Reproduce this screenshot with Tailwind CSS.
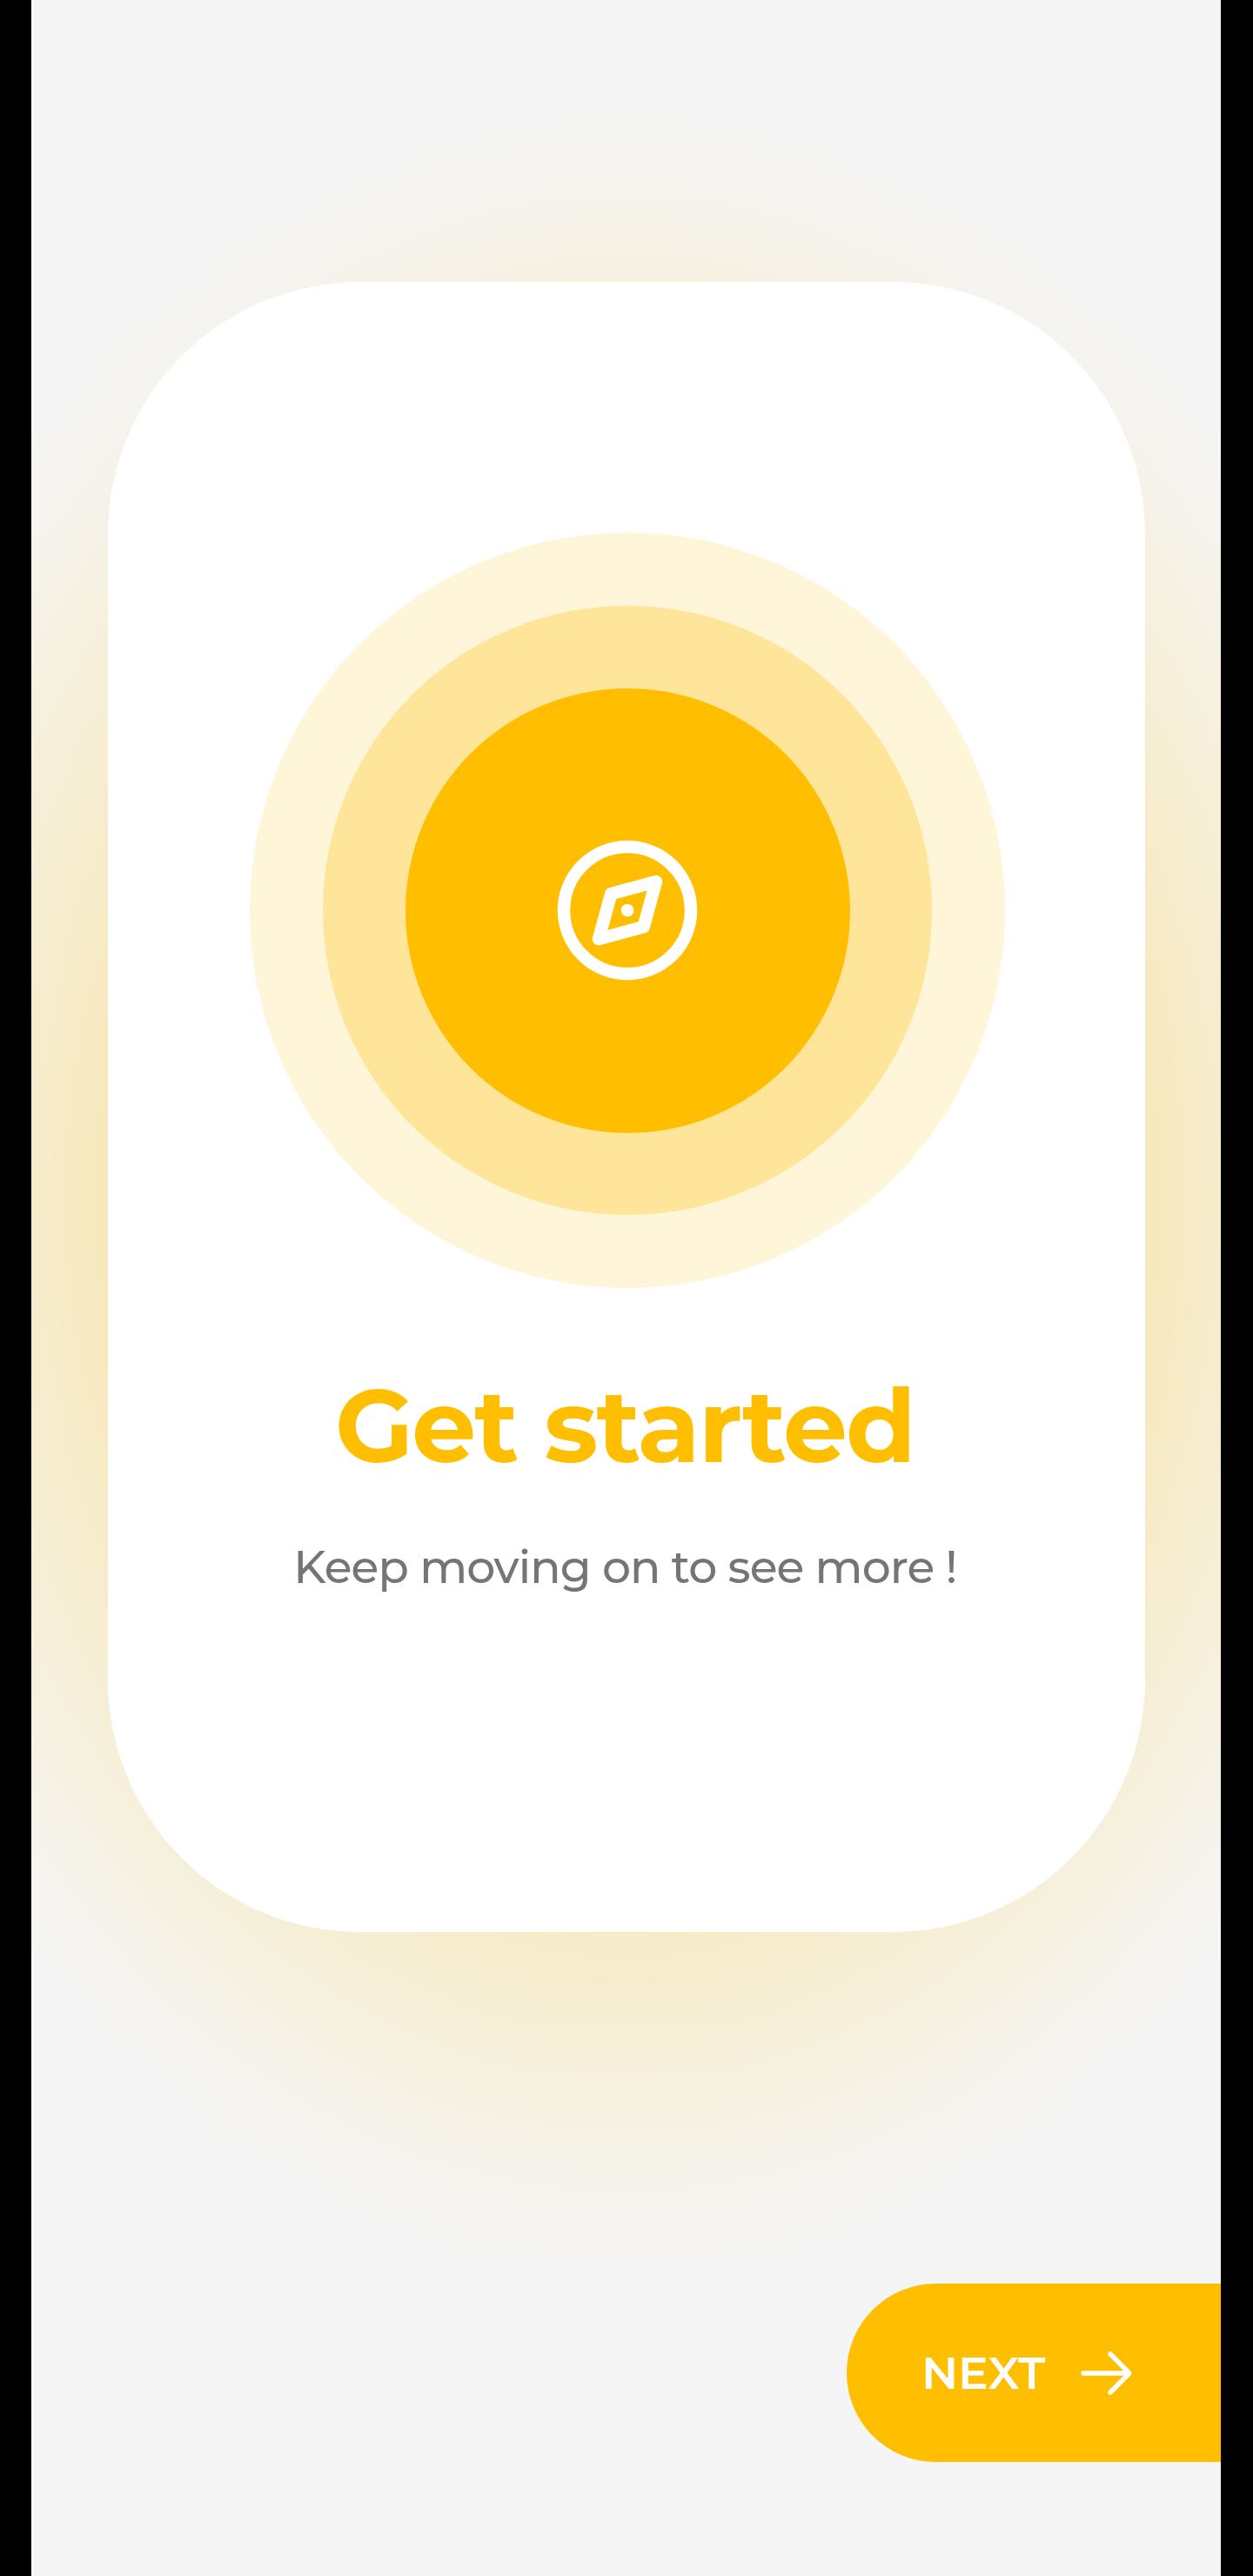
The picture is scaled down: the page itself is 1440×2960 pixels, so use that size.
<!DOCTYPE html>
<html lang="en">
<head>
<meta charset="utf-8">
<title>Get started</title>
<script src="https://cdn.jsdelivr.net/npm/@tailwindcss/browser@4"></script>
</head>
<body class="bg-black">
<div class="ml-[36px] flex h-[2960px] w-[1367px] flex-col overflow-hidden bg-[#f5f5f5] bg-[radial-gradient(970px_1250px_at_684px_1373px,rgba(255,194,10,0.24)_62%,rgba(255,194,10,0.19)_69%,rgba(255,194,10,0.14)_76%,rgba(255,194,10,0.095)_83%,rgba(255,194,10,0.055)_89%,rgba(255,194,10,0.025)_94%,rgba(255,194,10,0)_100%)] pt-[324px] font-['Montserrat','Inter',sans-serif]">
  <main class="ml-[88px] flex h-[1896px] w-[1192px] shrink-0 flex-col items-center rounded-[290px] bg-white pt-[288px]">
    <div class="ml-[2px] flex size-[868px] shrink-0 items-center justify-center rounded-full bg-[#fff5d9]">
      <div class="flex size-[700px] items-center justify-center rounded-full bg-[#ffe599]">
        <div class="flex size-[511px] items-center justify-center rounded-full bg-[#ffbf00]">
          <svg class="size-[162px]" viewBox="-81 -81 162 162" fill="none" stroke="white" stroke-width="14.5" stroke-linejoin="round">
            <circle r="73"/>
            <path d="M33-33L-18.7-19L-33 33L18.7 19Z"/>
            <circle r="7.3" fill="white" stroke="none"/>
          </svg>
        </div>
      </div>
    </div>
    <h1 class="mt-[88px] mr-[4px] h-[140px] text-[117px] leading-[140px] font-bold tracking-[-1.9px] whitespace-nowrap text-[#ffbf00]">Get started</h1>
    <p class="mt-[61px] mr-[3px] text-[52px] leading-[64px] font-medium tracking-[-0.9px] whitespace-nowrap text-[#757575]">Keep moving on to see more !</p>
  </main>
  <button class="mt-[404px] flex h-[205px] w-[430px] shrink-0 items-center self-end rounded-l-full bg-[#ffbf00] pl-[86px] text-white">
    <span class="w-[181px] text-left text-[52px] leading-[60px] font-semibold">NEXT</span>
    <svg class="h-[52px] w-[60px]" viewBox="0 0 60 52" fill="none" stroke="white" stroke-width="5.5" stroke-linecap="round" stroke-linejoin="round">
      <path d="M5 26H58M36 4L58 26L36 48"/>
    </svg>
  </button>
</div>
</body>
</html>
